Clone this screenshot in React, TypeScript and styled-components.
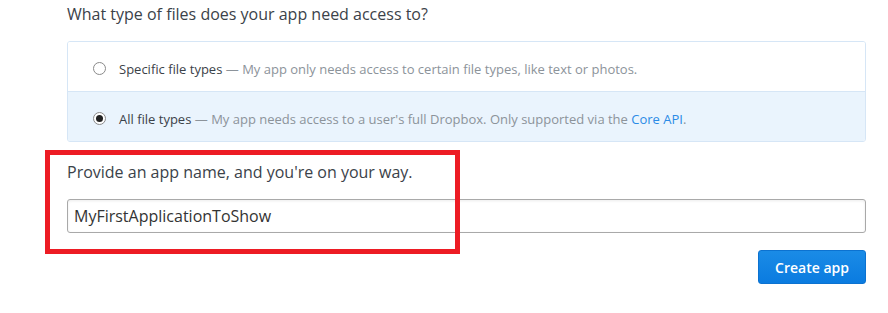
import React from "react";
import styled, { createGlobalStyle } from "styled-components";

const GlobalStyle = createGlobalStyle`
  body {
    margin: 0;
    background: #fff;
    font-family: "Open Sans", "Noto Sans", sans-serif;
    color: #3d464d;
  }
`;

interface Option {
  id: string;
  title: string;
  description: string;
  link?: string;
}

const options: Option[] = [
  {
    id: "specific",
    title: "Specific file types",
    description:
      "My app only needs access to certain file types, like text or photos.",
  },
  {
    id: "all",
    title: "All file types",
    description:
      "My app needs access to a user's full Dropbox. Only supported via the ",
    link: "Core API",
  },
];

export default function App() {
  const [selected, setSelected] = React.useState("all");
  const [name, setName] = React.useState("MyFirstApplicationToShow");

  return (
    <Page>
      <GlobalStyle />
      <Heading>What type of files does your app need access to?</Heading>
      <OptionBox>
        {options.map((option) => (
          <OptionRow
            key={option.id}
            $active={selected === option.id}
            onClick={() => setSelected(option.id)}
          >
            <Radio $checked={selected === option.id} />
            <OptionText>
              <OptionTitle>{option.title}</OptionTitle>
              <Description>
                {" — "}
                {option.description}
                {option.link && (
                  <>
                    <Link href="#">{option.link}</Link>.
                  </>
                )}
              </Description>
            </OptionText>
          </OptionRow>
        ))}
      </OptionBox>
      <NameSection>
        <Label>Provide an app name, and you're on your way.</Label>
        <NameInput value={name} onChange={(e) => setName(e.target.value)} />
        <Annotation />
      </NameSection>
      <Actions>
        <CreateButton>Create app</CreateButton>
      </Actions>
    </Page>
  );
}

const Page = styled.div`
  width: 799px;
  padding-left: 67px;
`;

const Heading = styled.div`
  font-size: 16px;
  line-height: 28px;
  color: #3b4249;
`;

const OptionBox = styled.div`
  margin-top: 13px;
  border: 1px solid #d6e6f6;
  border-radius: 3px;
  overflow: hidden;
`;

const OptionRow = styled.div<{ $active: boolean }>`
  box-sizing: border-box;
  display: flex;
  align-items: center;
  height: 49px;
  padding: 4px 0 0 25px;
  background: ${(p) => (p.$active ? "#eaf4fd" : "#fff")};
  cursor: pointer;
  & + & {
    height: 50px;
    border-top: 1px solid #d6e6f6;
  }
`;

const Radio = styled.span<{ $checked: boolean }>`
  box-sizing: border-box;
  width: 13px;
  height: 13px;
  border-radius: 50%;
  border: 1px solid #8a8a8a;
  background: #fff;
  display: flex;
  align-items: center;
  justify-content: center;
  &::after {
    content: "";
    display: ${(p) => (p.$checked ? "block" : "none")};
    width: 7px;
    height: 7px;
    border-radius: 50%;
    background: #222;
  }
`;

const OptionText = styled.div`
  margin-left: 13px;
  font-size: 13px;
  line-height: 18px;
`;

const OptionTitle = styled.span`
  color: #3b4249;
`;

const Description = styled.span`
  color: #8c939a;
`;

const Link = styled.a`
  color: #2b8be6;
  text-decoration: none;
`;

const NameSection = styled.div`
  position: relative;
  padding-top: 18px;
`;

const Label = styled.div`
  font-size: 16px;
  line-height: 24px;
  color: #3b4249;
`;

const NameInput = styled.input`
  box-sizing: border-box;
  display: block;
  width: 100%;
  height: 34px;
  margin-top: 15px;
  padding: 0 6px;
  border: 1px solid #a9a9a9;
  border-radius: 3px;
  box-shadow: inset 0 1px 3px rgba(0, 0, 0, 0.08);
  font-family: "Open Sans", "Noto Sans", sans-serif;
  font-size: 16px;
  color: #333;
  outline: none;
`;

const Annotation = styled.div`
  position: absolute;
  box-sizing: border-box;
  left: -22px;
  top: 8px;
  width: 415px;
  height: 104px;
  border: 5px solid #ed1c24;
  pointer-events: none;
`;

const Actions = styled.div`
  display: flex;
  justify-content: flex-end;
  margin-top: 17px;
`;

const CreateButton = styled.button`
  box-sizing: border-box;
  width: 108px;
  height: 34px;
  border: 1px solid #0c72d0;
  border-radius: 3px;
  background: linear-gradient(#1a8be6, #0a7be0);
  color: #fff;
  font-family: "Open Sans", "Noto Sans", sans-serif;
  font-size: 14px;
  font-weight: 600;
  cursor: pointer;
`;
